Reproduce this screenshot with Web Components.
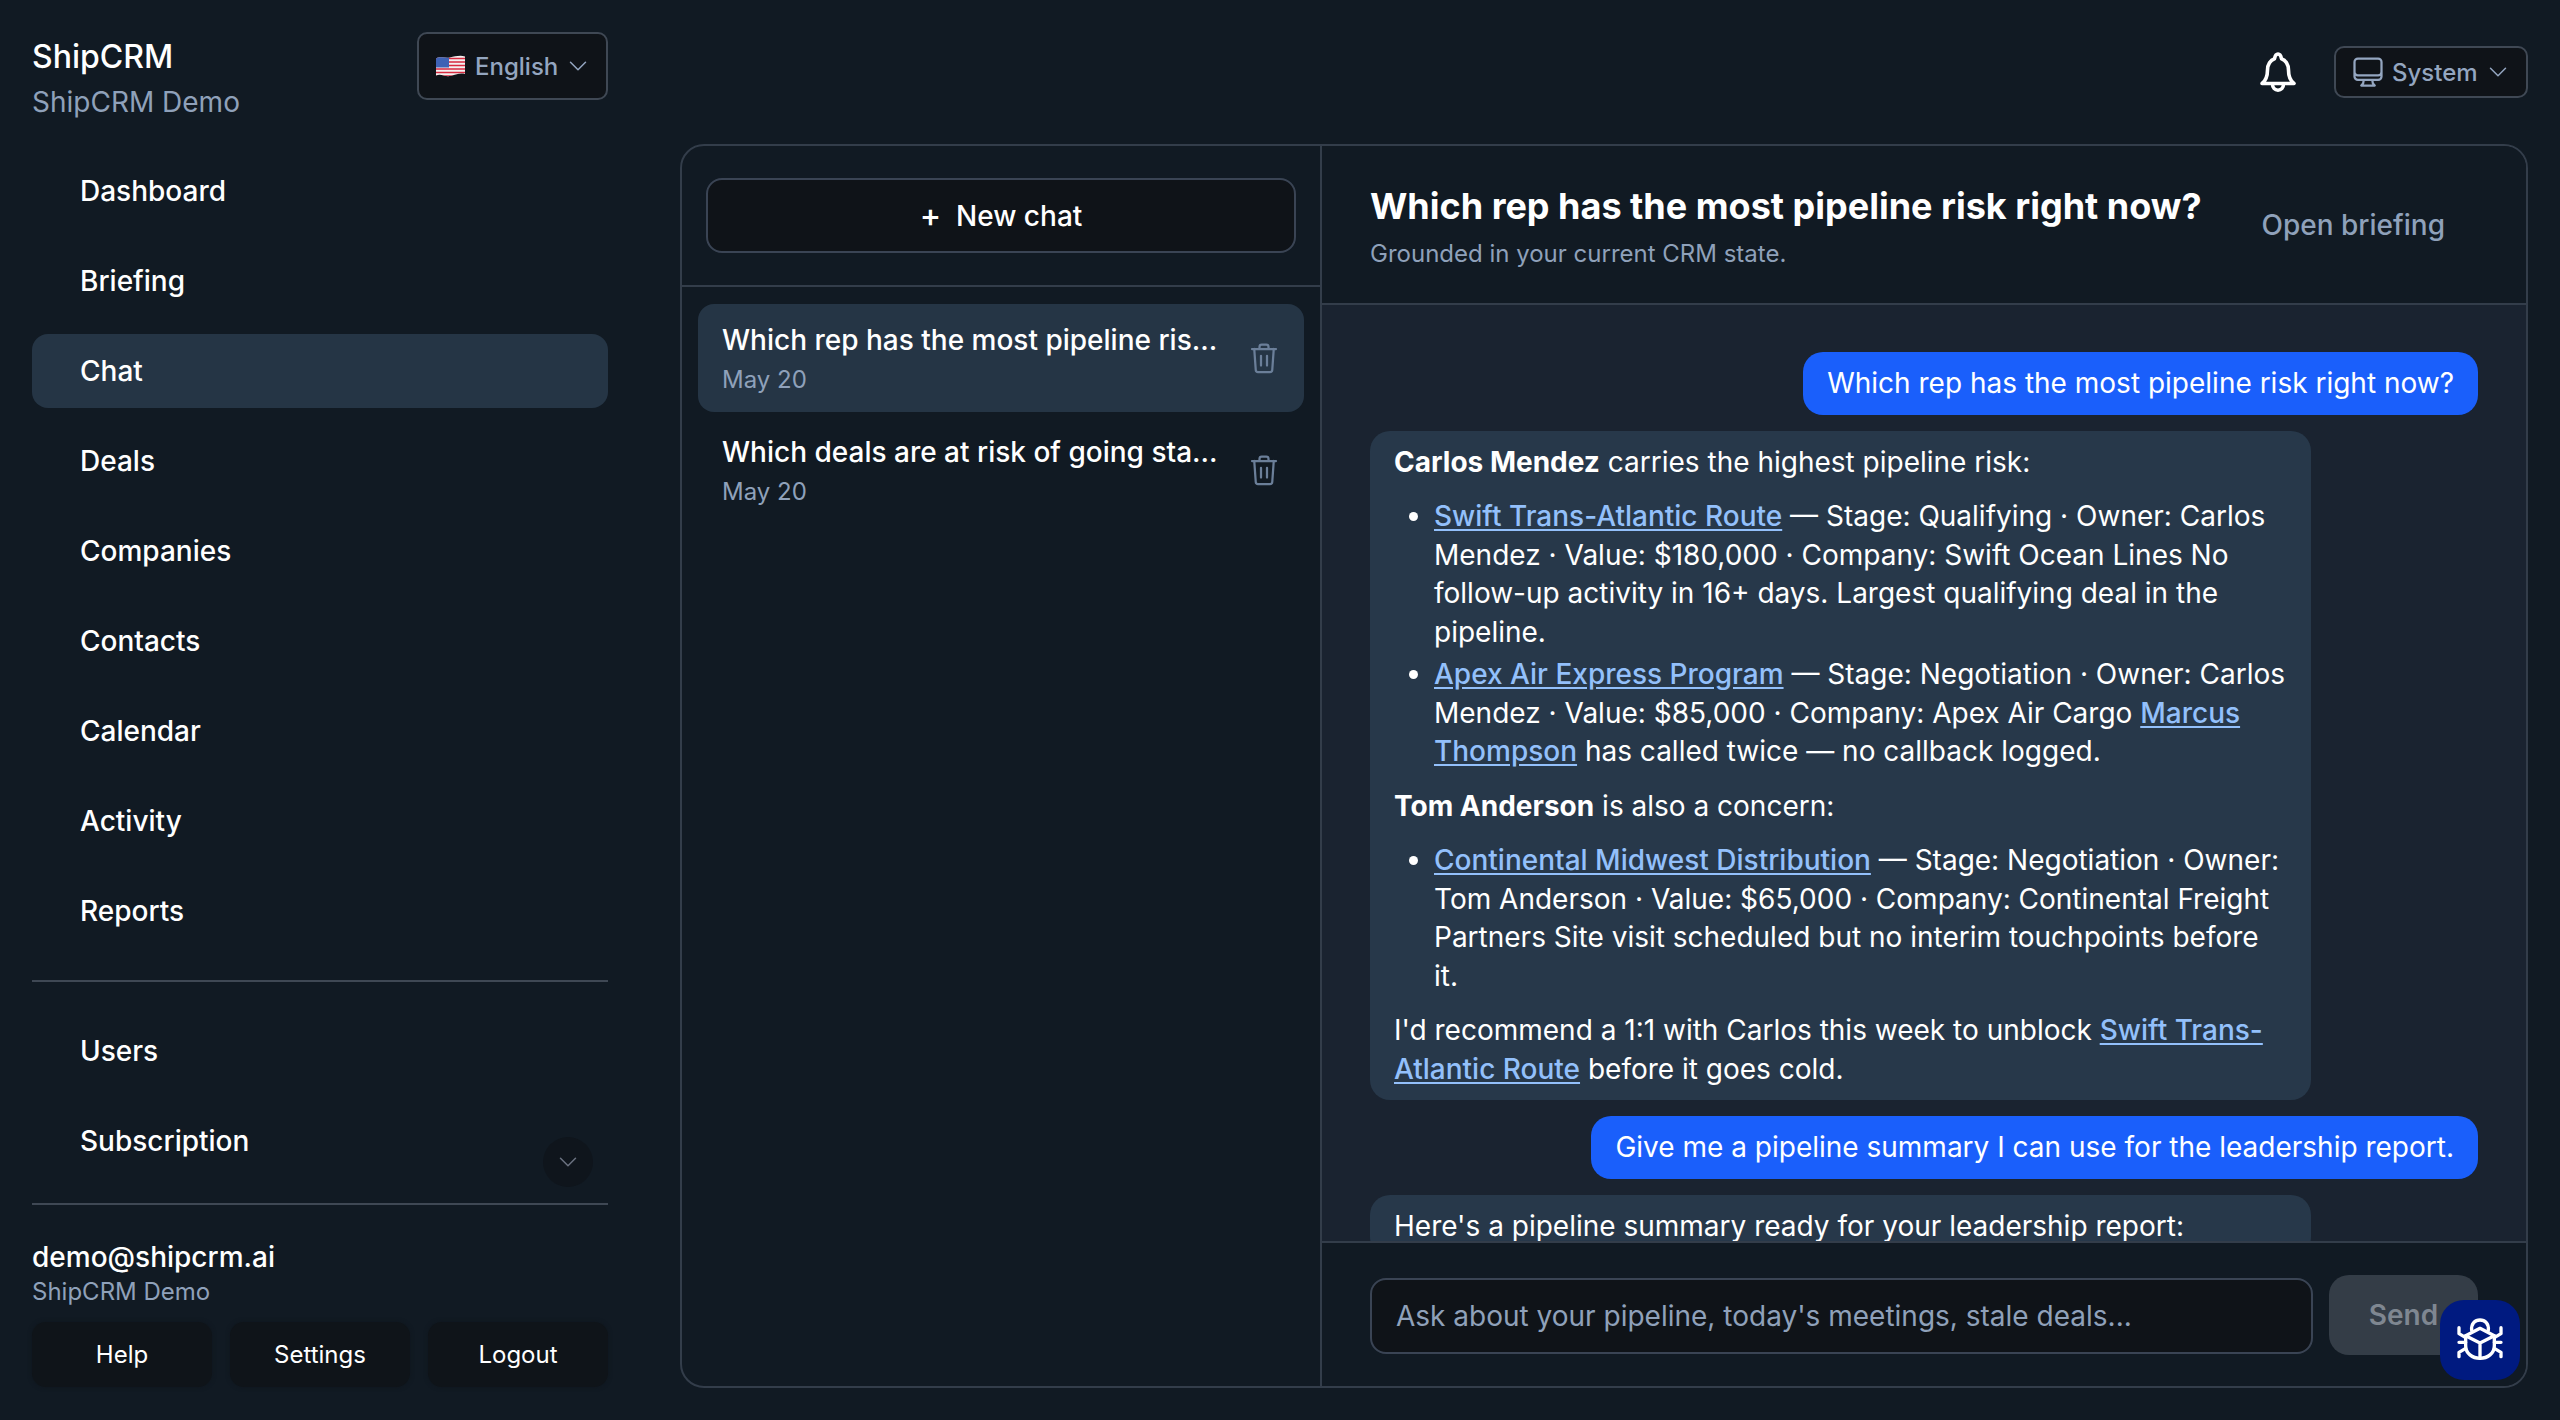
<!DOCTYPE html>
<html lang="en">
<head>
<meta charset="utf-8">
<title>ShipCRM</title>
<style>
  html, body { margin: 0; height: 100%; background: #111a23; }
  body { font-family: Inter, "Liberation Sans", sans-serif; color: #fff; overflow: hidden; }
</style>
</head>
<body>
<template id="risk-answer">
  <p><strong>Carlos Mendez</strong> carries the highest pipeline risk:</p>
  <ul>
    <li><a>Swift Trans-Atlantic Route</a> — Stage: Qualifying · Owner: Carlos Mendez · Value: $180,000 · Company: Swift Ocean Lines No follow-up activity in 16+ days. Largest qualifying deal in the pipeline.</li>
    <li><a>Apex Air Express Program</a> — Stage: Negotiation · Owner: Carlos Mendez · Value: $85,000 · Company: Apex Air Cargo <a>Marcus Thompson</a> has called twice — no callback logged.</li>
  </ul>
  <p><strong>Tom Anderson</strong> is also a concern:</p>
  <ul>
    <li><a>Continental Midwest Distribution</a> — Stage: Negotiation · Owner: Tom Anderson · Value: $65,000 · Company: Continental Freight Partners Site visit scheduled but no interim touchpoints before it.</li>
  </ul>
  <p>I'd recommend a 1:1 with Carlos this week to unblock <a>Swift Trans-Atlantic Route</a> before it goes cold.</p>
</template>
<crm-app></crm-app>
<script>
const ICONS = {
  chevron: '<path d="M19.5 8.25l-7.5 7.500-7.500-7.500" fill="none" stroke="currentColor" stroke-width="1.5" stroke-linecap="round" stroke-linejoin="round"/>',
  monitor: '<path d="M9 17.25v1.007a3 3 0 0 1-.879 2.122L7.5 21h9l-.621-.621A3 3 0 0 1 15 18.257V17.25m6-12V15a2.25 2.25 0 0 1-2.25 2.25H5.25A2.25 2.25 0 0 1 3 15V5.25m18 0A2.25 2.25 0 0 0 18.75 3H5.25A2.25 2.25 0 0 0 3 5.25m18 0V12a2.25 2.25 0 0 1-2.25 2.25H5.25A2.25 2.25 0 0 1 3 12V5.25" fill="none" stroke="currentColor" stroke-width="1.5" stroke-linecap="round" stroke-linejoin="round"/>',
  trash: '<path d="M4 6h16M9 6V4.500A1.500 1.500 0 0 1 10.500 3h3A1.500 1.500 0 0 1 15 4.500V6M5.500 6l1 14a1.500 1.500 0 0 0 1.500 1.400h8a1.500 1.500 0 0 0 1.500-1.400l1-14M10 10.500v6.500M14 10.500v6.500" fill="none" stroke="currentColor" stroke-width="1.5" stroke-linecap="round" stroke-linejoin="round"/>'
};

function icon(name, size) {
  return `<svg width="${size}" height="${size}" viewBox="0 0 24 24" aria-hidden="true">${ICONS[name]}</svg>`;
}

const BELL = `<svg width="36" height="40" viewBox="0 0 36 40" aria-hidden="true"><g fill="none" stroke="currentColor" stroke-width="3.600" stroke-linecap="round" stroke-linejoin="round"><path d="M2 31.500c4-3 5.500-7 5.500-13.500 0-5.500 3-10 7-11.200C15 4 16 2 18 2s3 2 3.500 4.800c4 1.200 7 5.700 7 11.200 0 6.500 1.500 10.500 5.500 13.500z"/><path d="M12.500 32c0 4 2.500 6.200 5.500 6.200s5.500-2.200 5.500-6.200"/></g></svg>`;

const BUG = `<svg width="70" height="70" viewBox="0 0 210 210" aria-hidden="true"><g fill="none" stroke="currentColor" stroke-width="10" stroke-linecap="round" stroke-linejoin="round"><path d="M80 76C78 56 90 45 105 45s27 11 25 31"/><path d="M105 70l43 22v30c0 23-20 38-43 38s-43-15-43-38V92z"/><path d="M62 92l43 22 43-22M105 114v46"/><path d="M62 98L42 86V68M148 98l20-12V68M42 112h20M148 112h20M62 130l-20 12v13M148 130l20 12v13"/></g></svg>`;

const FLAG = `<svg width="29" height="22" viewBox="0 0 29 22" aria-hidden="true"><defs><clipPath id="wave"><path d="M0 3.500C5 1 9 3.500 14 2.500S24 0 29 1.500V19C24 17.500 19 20 14 21S5 18 0 20.500z"/></clipPath></defs><g clip-path="url(#wave)"><rect width="29" height="22" fill="#f3f1f1"/><path d="M0 3.500h29M0 7h29M0 10.500h29M0 14h29M0 17.500h29M0 21h29" stroke="#d8293f" stroke-width="1.700"/><rect width="13" height="12.500" fill="#3f62b5"/></g></svg>`;

class CrmBrand extends HTMLElement {
  connectedCallback() {
    this.attachShadow({ mode: 'open' }).innerHTML = `
      <style>
        :host { display: flex; flex: none; justify-content: space-between; align-items: flex-start; }
        .name { font-size: 32px; font-weight: 500; line-height: 40px; margin-top: 5px; }
        .org { font-size: 28px; line-height: 36px; margin-top: 7px; color: #8fa1ba; }
        .lang { box-sizing: border-box; width: 191px; height: 68px; display: flex; align-items: center; padding: 0 0 0 17px; background: #0f1318; border: 2px solid #3f4854; border-radius: 10px; color: #94a6c0; font-size: 24px; font-weight: 500; }
        .lang span { margin: 0 8px 0 10px; }
        .lang svg { flex: none; }
      </style>
      <div><div class="name">ShipCRM</div><div class="org">ShipCRM Demo</div></div>
      <div class="lang">${FLAG}<span>English</span>${icon('chevron', 24)}</div>`;
  }
}

class CrmNavItem extends HTMLElement {
  connectedCallback() {
    this.attachShadow({ mode: 'open' }).innerHTML = `
      <style>
        :host { display: flex; flex: none; align-items: center; height: 74px; padding-left: 48px; border-radius: 16px; font-size: 28px; font-weight: 500; color: #fff; }
        :host([active]) { background: #253545; }
      </style>
      <slot></slot>`;
  }
}
customElements.define('crm-nav-item', CrmNavItem);

class CrmSidebar extends HTMLElement {
  connectedCallback() {
    this.attachShadow({ mode: 'open' }).innerHTML = `
      <style>
        :host { display: flex; flex-direction: column; width: 576px; flex: none; }
        nav { display: flex; flex: none; flex-direction: column; gap: 16px; }
        .main { margin-top: 34px; }
        hr { flex: none; border: 0; height: 2px; background: #3f4854; margin: 0; }
        .bottom { position: relative; height: 164px; margin-top: 32px; padding-bottom: 25px; }
        .more { position: absolute; right: 15px; bottom: 16px; width: 50px; height: 50px; border-radius: 50%; display: flex; align-items: center; justify-content: center; background: #0f151c; color: #6b7280; }
        .user { flex: none; margin-top: 34px; }
        .mail { font-size: 28px; font-weight: 500; line-height: 36px; }
        .org { font-size: 24px; line-height: 32px; margin-top: 1px; color: #8fa1ba; }
        .actions { display: grid; grid-template-columns: repeat(3, 1fr); gap: 18px; margin-top: 14px; }
        .actions div { height: 65px; display: flex; align-items: center; justify-content: center; background: #0f1419; border-radius: 14px; font-size: 24px; font-weight: 400; box-shadow: 0 0 4px rgba(15, 20, 25, .6); }
      </style>
      <crm-brand></crm-brand>
      <nav class="main">
        <crm-nav-item>Dashboard</crm-nav-item>
        <crm-nav-item>Briefing</crm-nav-item>
        <crm-nav-item active>Chat</crm-nav-item>
        <crm-nav-item>Deals</crm-nav-item>
        <crm-nav-item>Companies</crm-nav-item>
        <crm-nav-item>Contacts</crm-nav-item>
        <crm-nav-item>Calendar</crm-nav-item>
        <crm-nav-item>Activity</crm-nav-item>
        <crm-nav-item>Reports</crm-nav-item>
      </nav>
      <hr style="margin-top:32px">
      <nav class="bottom">
        <crm-nav-item>Users</crm-nav-item>
        <crm-nav-item>Subscription</crm-nav-item>
        <div class="more">${icon('chevron', 24)}</div>
      </nav>
      <hr>
      <div class="user">
        <div class="mail">demo@shipcrm.ai</div>
        <div class="org">ShipCRM Demo</div>
        <div class="actions"><div>Help</div><div>Settings</div><div>Logout</div></div>
      </div>`;
  }
}

class CrmTopbar extends HTMLElement {
  connectedCallback() {
    this.attachShadow({ mode: 'open' }).innerHTML = `
      <style>
        :host { display: flex; flex: none; justify-content: flex-end; align-items: center; gap: 38px; height: 52px; }
        .bell { display: flex; color: #fff; }
        .theme { box-sizing: border-box; width: 194px; height: 52px; display: flex; align-items: center; padding: 0 0 0 14px; background: #0f1318; border: 2px solid #3f4854; border-radius: 10px; color: #94a6c0; font-size: 24px; font-weight: 500; }
        .theme span { margin: 0 8px 0 6px; }
        .theme svg { flex: none; }
      </style>
      <div class="bell">${BELL}</div>
      <div class="theme">${icon('monitor', 36)}<span>System</span>${icon('chevron', 24)}</div>`;
  }
}

class CrmThreadItem extends HTMLElement {
  connectedCallback() {
    this.attachShadow({ mode: 'open' }).innerHTML = `
      <style>
        :host { box-sizing: border-box; display: flex; flex: none; align-items: flex-start; height: 108px; padding: 17px 22px 0 24px; border-radius: 16px; }
        :host([active]) { background: #253545; }
        .text { flex: 1; min-width: 0; }
        .title { font-size: 28px; font-weight: 500; line-height: 38px; white-space: nowrap; }
        .date { font-size: 24px; line-height: 32px; margin-top: 5px; color: #8fa1ba; }
        .trash { display: flex; color: #6b7f99; margin-top: 19px; }
      </style>
      <div class="text"><div class="title"><slot></slot></div><div class="date">${this.getAttribute('date')}</div></div>
      <div class="trash">${icon('trash', 36)}</div>`;
  }
}
customElements.define('crm-thread-item', CrmThreadItem);

class CrmThreadList extends HTMLElement {
  connectedCallback() {
    this.attachShadow({ mode: 'open' }).innerHTML = `
      <style>
        :host { display: flex; flex-direction: column; box-sizing: border-box; width: 640px; flex: none; border-right: 2px solid #333d4a; }
        .new { padding: 32px 24px; border-bottom: 2px solid #333d4a; }
        .new div { box-sizing: border-box; height: 75px; display: flex; align-items: center; justify-content: center; gap: 15px; background: #0f1318; border: 2px solid #3a4454; border-radius: 16px; font-size: 28px; font-weight: 500; }
        .new b { font-size: 32px; font-weight: 500; line-height: 1; }
        .list { display: flex; flex-direction: column; gap: 4px; padding: 17px 16px; }
      </style>
      <div class="new"><div><b>+</b> New chat</div></div>
      <div class="list"><slot></slot></div>`;
  }
}

class CrmUserMessage extends HTMLElement {
  connectedCallback() {
    this.attachShadow({ mode: 'open' }).innerHTML = `
      <style>
        :host { box-sizing: border-box; align-self: flex-end; padding: 12px 24px; background: #1a5ffb; border-radius: 20px; font-size: 28px; line-height: 38.5px; color: #fff; flex: none; }
      </style>
      <slot></slot>`;
  }
}
customElements.define('crm-user-message', CrmUserMessage);

class CrmAssistantMessage extends HTMLElement {
  connectedCallback() {
    this.attachShadow({ mode: 'open' }).innerHTML = `
      <style>
        :host { display: block; box-sizing: border-box; width: 941px; flex: none; padding: 12px 24px; background: #27384a; border-radius: 20px; font-size: 28px; line-height: 38.5px; color: #fff; }
        p { margin: 0 0 16px; }
        p:last-child { margin-bottom: 0; }
        ul { margin: 0 0 16px; padding-left: 40px; }
        li { margin-bottom: 4px; }
        li:last-child { margin-bottom: 0; }
        a { color: #93c0fb; font-weight: 500; text-decoration: underline; text-underline-offset: 3px; }
        strong { font-weight: 700; }
      </style>
      <slot></slot>`;
    const id = this.getAttribute('content');
    if (id) this.shadowRoot.append(document.getElementById(id).content.cloneNode(true));
  }
}
customElements.define('crm-assistant-message', CrmAssistantMessage);

class CrmConversation extends HTMLElement {
  connectedCallback() {
    this.attachShadow({ mode: 'open' }).innerHTML = `
      <style>
        :host { display: flex; flex-direction: column; flex: 1; min-width: 0; background: #111a23; }
        header { box-sizing: border-box; height: 159px; display: flex; align-items: flex-start; justify-content: space-between; padding: 38px 81px 0 48px; border-bottom: 2px solid #333d4a; flex: none; }
        h1 { margin: 0; font-size: 36px; font-weight: 700; line-height: 44px; white-space: nowrap; }
        p { margin: 10px 0 0; font-size: 24px; line-height: 32px; color: #8fa1ba; }
        .open { margin-top: 21px; font-size: 28px; line-height: 40px; font-weight: 500; color: #8fa1ba; }
        .scroll { flex: 1; min-height: 0; overflow: hidden; display: flex; flex-direction: column; gap: 16px; padding: 47px 48px 0 48px; background: #1a2330; }
        .composer { box-sizing: border-box; height: 145px; flex: none; display: flex; gap: 16px; padding: 32px 48px 0 48px; border-top: 2px solid #333d4a; }
        .input { box-sizing: border-box; flex: 1; height: 76px; margin-top: 3px; display: flex; align-items: center; padding: 0 24px; background: #0f1318; border: 2px solid #3a4454; border-radius: 16px; font-size: 28px; color: #8fa1ba; }
        .send { box-sizing: border-box; width: 149px; height: 80px; display: flex; align-items: center; justify-content: center; background: #343d47; border-radius: 20px; font-size: 28px; font-weight: 600; color: #7f8791; }
      </style>
      <header>
        <div>
          <h1>Which rep has the most pipeline risk right now?</h1>
          <p>Grounded in your current CRM state.</p>
        </div>
        <div class="open">Open briefing</div>
      </header>
      <div class="scroll"><slot></slot></div>
      <div class="composer">
        <div class="input">Ask about your pipeline, today's meetings, stale deals...</div>
        <div class="send">Send</div>
      </div>`;
  }
}

class CrmBugButton extends HTMLElement {
  connectedCallback() {
    this.attachShadow({ mode: 'open' }).innerHTML = `
      <style>
        :host { position: fixed; left: 2440px; top: 1300px; width: 80px; height: 80px; display: flex; align-items: center; justify-content: center; background: #001a80; border-radius: 24px; color: #fff; }
      </style>
      ${BUG}`;
  }
}

class CrmApp extends HTMLElement {
  connectedCallback() {
    this.attachShadow({ mode: 'open' }).innerHTML = `
      <style>
        :host { display: flex; box-sizing: border-box; width: 2560px; height: 1420px; padding: 32px; gap: 72px; }
        .content { display: flex; flex-direction: column; flex: 1; min-width: 0; padding-top: 14px; }
        .panel { display: flex; flex: none; height: 1244px; margin-top: 46px; box-sizing: border-box; border: 2px solid #333d4a; border-radius: 24px; overflow: hidden; }
      </style>
      <crm-sidebar></crm-sidebar>
      <div class="content">
        <crm-topbar></crm-topbar>
        <div class="panel"><slot></slot></div>
      </div>
      <crm-bug-button></crm-bug-button>`;
    this.innerHTML = `
      <crm-thread-list>
        <crm-thread-item active date="May 20">Which rep has the most pipeline ris...</crm-thread-item>
        <crm-thread-item date="May 20">Which deals are at risk of going sta...</crm-thread-item>
      </crm-thread-list>
      <crm-conversation>
        <crm-user-message>Which rep has the most pipeline risk right now?</crm-user-message>
        <crm-assistant-message content="risk-answer"></crm-assistant-message>
        <crm-user-message>Give me a pipeline summary I can use for the leadership report.</crm-user-message>
        <crm-assistant-message>Here's a pipeline summary ready for your leadership report:</crm-assistant-message>
      </crm-conversation>`;
  }
}

customElements.define('crm-brand', CrmBrand);
customElements.define('crm-sidebar', CrmSidebar);
customElements.define('crm-topbar', CrmTopbar);
customElements.define('crm-thread-list', CrmThreadList);
customElements.define('crm-conversation', CrmConversation);
customElements.define('crm-bug-button', CrmBugButton);
customElements.define('crm-app', CrmApp);
</script>
</body>
</html>
